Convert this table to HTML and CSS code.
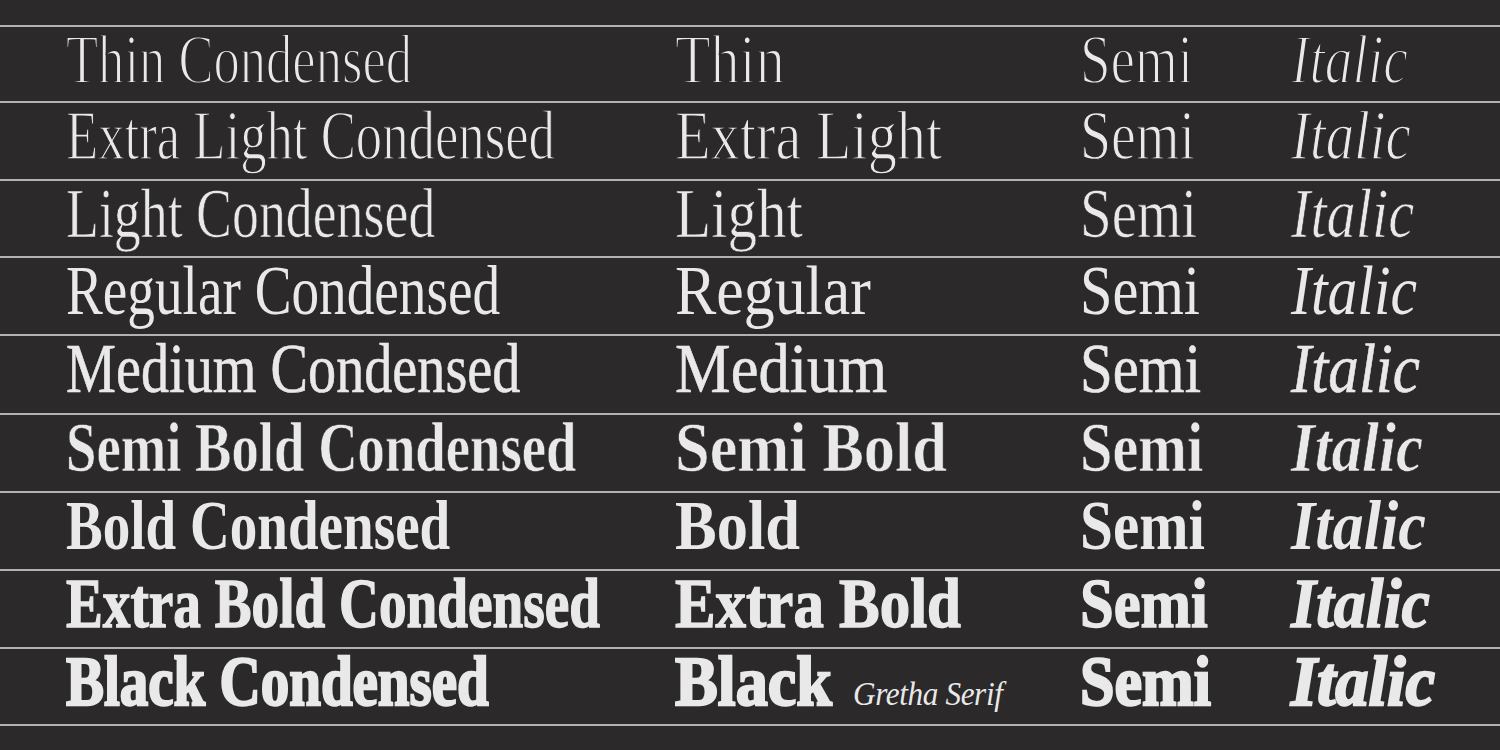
FILE: index.html
```html
<!DOCTYPE html>
<html lang="en">
<head>
<meta charset="utf-8">
<title>Gretha Serif</title>
<link rel="stylesheet" href="styles.css">
</head>
<body>
<main class="sheet">
  <div class="row r1"><span class="cell c1">Thin Condensed</span><span class="cell c2">Thin</span><span class="cell c3">Semi</span><span class="cell c4">Italic</span></div>
  <div class="row r2"><span class="cell c1">Extra Light Condensed</span><span class="cell c2">Extra Light</span><span class="cell c3">Semi</span><span class="cell c4">Italic</span></div>
  <div class="row r3"><span class="cell c1">Light Condensed</span><span class="cell c2">Light</span><span class="cell c3">Semi</span><span class="cell c4">Italic</span></div>
  <div class="row r4"><span class="cell c1">Regular Condensed</span><span class="cell c2">Regular</span><span class="cell c3">Semi</span><span class="cell c4">Italic</span></div>
  <div class="row r5"><span class="cell c1">Medium Condensed</span><span class="cell c2">Medium</span><span class="cell c3">Semi</span><span class="cell c4">Italic</span></div>
  <div class="row r6"><span class="cell c1">Semi Bold Condensed</span><span class="cell c2">Semi Bold</span><span class="cell c3">Semi</span><span class="cell c4">Italic</span></div>
  <div class="row r7"><span class="cell c1">Bold Condensed</span><span class="cell c2">Bold</span><span class="cell c3">Semi</span><span class="cell c4">Italic</span></div>
  <div class="row r8"><span class="cell c1">Extra Bold Condensed</span><span class="cell c2">Extra Bold</span><span class="cell c3">Semi</span><span class="cell c4">Italic</span></div>
  <div class="row r9 last"><span class="cell c1">Black Condensed</span><span class="cell c2">Black<span class="name">Gretha Serif</span></span><span class="cell c3">Semi</span><span class="cell c4">Italic</span></div>
</main>
</body>
</html>
```
FILE: styles.css
```css
html, body {
  margin: 0;
  padding: 0;
  background: #2b292a;
  overflow: hidden;
}

.sheet {
  width: 1500px;
  height: 750px;
  padding-top: 25px;
  box-sizing: border-box;
  font-family: "Liberation Serif", "Times New Roman", serif;
  font-size: 70px;
  color: #e9e9e9;
}

.row {
  display: grid;
  grid-template-columns: 609px 405px 211px 1fr;
  align-items: start;
  padding-left: 66px;
  border-top: 2px solid #b3b2b2;
  box-sizing: border-box;
  -webkit-text-stroke-color: #2b292a;
}

.row.last {
  border-bottom: 2px solid #b3b2b2;
}

.cell {
  display: block;
  justify-self: start;
  white-space: nowrap;
  line-height: 66px;
  transform-origin: 0 0;
  transform: scaleX(var(--s, 0.8));
}

.c4 {
  font-style: italic;
}

.name {
  display: inline-block;
  margin-left: 23px;
  font-size: 34px;
  font-style: italic;
  font-weight: 400;
  letter-spacing: -0.4px;
  -webkit-text-stroke: 0;
  vertical-align: baseline;
}

/* row heights and weights */
.r1 { height: 76px; font-weight: 400; -webkit-text-stroke-width: 1.8px; }
.r2 { height: 78px; font-weight: 400; -webkit-text-stroke-width: 1.3px; }
.r3 { height: 77px; font-weight: 400; -webkit-text-stroke-width: 0.7px; }
.r4 { height: 78px; font-weight: 400; -webkit-text-stroke-width: 0; }
.r5 { height: 79px; font-weight: 400; -webkit-text-stroke: 0.6px #e9e9e9; }
.r6 { height: 78px; font-weight: 700; -webkit-text-stroke-width: 0.6px; }
.r7 { height: 78px; font-weight: 700; -webkit-text-stroke-width: 0; }
.r8 { height: 78px; font-weight: 700; -webkit-text-stroke: 1.4px #e9e9e9; }
.r9 { height: 79px; font-weight: 700; -webkit-text-stroke: 2.3px #e9e9e9; }

/* horizontal widths per style (condensed / normal / semi / italic) */
.r1 .c1 { --s: .751; } .r1 .c2 { --s: .831; } .r1 .c3 { --s: .786; } .r1 .c4 { --s: .791; }
.r2 .c1 { --s: .753; } .r2 .c2 { --s: .833; } .r2 .c3 { --s: .799; } .r2 .c4 { --s: .811; }
.r3 .c1 { --s: .769; } .r3 .c2 { --s: .844; } .r3 .c3 { --s: .813; } .r3 .c4 { --s: .833; }
.r4 .c1 { --s: .789; } .r4 .c2 { --s: .884; } .r4 .c3 { --s: .834; } .r4 .c4 { --s: .853; }
.r5 .c1 { --s: .803; } .r5 .c2 { --s: .894; } .r5 .c3 { --s: .841; } .r5 .c4 { --s: .873; }
.r6 .c1 { --s: .781; } .r6 .c2 { --s: .891; } .r6 .c3 { --s: .833; } .r6 .c4 { --s: .870; }
.r7 .c1 { --s: .787; } .r7 .c2 { --s: .893; } .r7 .c3 { --s: .846; } .r7 .c4 { --s: .890; }
.r8 .c1 { --s: .789; } .r8 .c2 { --s: .870; } .r8 .c3 { --s: .866; } .r8 .c4 { --s: .916; }
.r9 .c1 { --s: .814; } .r9 .c2 { --s: .917; } .r9 .c3 { --s: .887; } .r9 .c4 { --s: .950; }
```
